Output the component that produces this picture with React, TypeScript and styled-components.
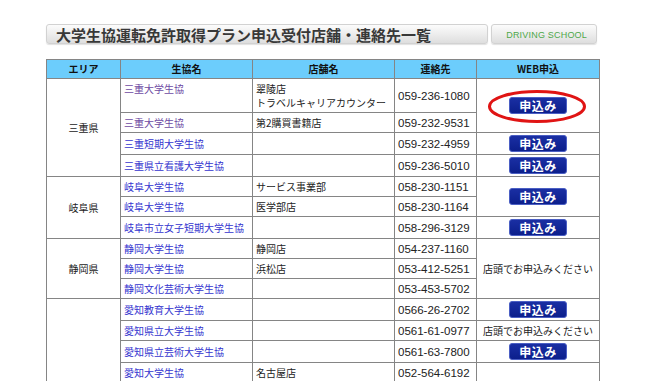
import React from 'react';
import styled, { createGlobalStyle } from 'styled-components';

const GlobalStyle = createGlobalStyle`
  html, body { margin: 0; padding: 0; background: #fff; }
  body {
    font-family: "Noto Sans CJK JP", "Noto Sans", sans-serif;
    color: #222;
  }
`;

const Page = styled.div`
  padding: 24px 0 0 46px;
  width: 553px;
`;

const HeadBar = styled.div`
  display: flex;
  gap: 3px;
  height: 20px;
`;

const TitleBox = styled.div`
  flex: 0 0 442px;
  box-sizing: border-box;
  border: 1px solid #d2d2d2;
  border-radius: 3px;
  background: linear-gradient(#fcfcfc, #dedede);
  box-shadow: 0 1px 1px rgba(0, 0, 0, 0.12);
  display: flex;
  align-items: center;
  padding-left: 9px;
  font-size: 15px;
  font-weight: bold;
  color: #383838;
  line-height: 1;
  white-space: nowrap;
`;

const SchoolBox = styled.div`
  flex: 0 0 106px;
  box-sizing: border-box;
  border: 1px solid #d2d2d2;
  border-radius: 3px;
  background: linear-gradient(#fcfcfc, #dedede);
  box-shadow: 0 1px 1px rgba(0, 0, 0, 0.12);
  display: flex;
  align-items: flex-end;
  justify-content: flex-end;
  padding: 0 9px 3px 0;
  font-family: "Liberation Sans", Arial, sans-serif;
  font-size: 9px;
  letter-spacing: 0.2px;
  color: #4ea84a;
  line-height: 1;
`;

const Table = styled.table`
  margin-top: 15px;
  width: 553px;
  table-layout: fixed;
  border-collapse: collapse;
  font-size: 10px;
  line-height: 14px;
`;

const HeadCell = styled.th`
  background: #6ccdfc;
  border: 1px solid #858585;
  padding: 2px 3px;
  font-weight: bold;
  color: #111;
  text-align: center;
`;

const Cell = styled.td<{ $center?: boolean }>`
  border: 1px solid #858585;
  padding: 3px 3px 2px;
  vertical-align: middle;
  text-align: ${(p) => (p.$center ? 'center' : 'left')};
  color: #222;
  white-space: nowrap;
  overflow: visible;
`;

const TopCell = styled(Cell)`
  vertical-align: top;
`;

const ButtonCell = styled(Cell)`
  padding: 2px 3px;
`;

const PhoneCell = styled(Cell)`
  font-family: "Liberation Sans", Arial, sans-serif;
  font-size: 11.5px;
`;

const CoopLink = styled.a<{ $visited?: boolean }>`
  color: ${(p) => (p.$visited ? '#6e4aa3' : '#3535cf')};
  text-decoration: none;
`;

const ButtonWrap = styled.div`
  position: relative;
  width: 58px;
  margin: 0 auto;
`;

const ApplyButton = styled.a`
  display: block;
  box-sizing: border-box;
  width: 58px;
  height: 17px;
  border: 1px solid #4b5fc4;
  border-radius: 3px;
  background: linear-gradient(#1a2fa3, #0c1f8c);
  color: #fff;
  font-size: 12px;
  font-weight: bold;
  line-height: 15px;
  text-align: center;
  text-decoration: none;
  letter-spacing: 0.5px;
`;

const Ellipse = styled.svg`
  position: absolute;
  left: -21px;
  top: -7px;
  width: 98px;
  height: 33px;
  overflow: visible;
  pointer-events: none;
`;

const ShopNote = styled.span`
  font-size: 10px;
  color: #222;
`;

const Apply: React.FC<{ circled?: boolean }> = ({ circled }) => (
  <ButtonWrap>
    <ApplyButton href="#">申込み</ApplyButton>
    {circled && (
      <Ellipse viewBox="0 0 98 33">
        <ellipse cx="49" cy="16.5" rx="47.5" ry="15" fill="none" stroke="#e01414" strokeWidth="3" />
      </Ellipse>
    )}
  </ButtonWrap>
);

type Row = {
  area?: { name: string; span: number };
  coop: string;
  visited?: boolean;
  shop?: string[];
  phone: string;
  web?: { kind: 'button' | 'note' | 'blank'; span: number; circled?: boolean };
};

const rows: Row[] = [
  { area: { name: '三重県', span: 4 }, coop: '三重大学生協', visited: true, shop: ['翠陵店', 'トラベルキャリアカウンター'], phone: '059-236-1080', web: { kind: 'button', span: 2, circled: true } },
  { coop: '三重大学生協', visited: true, shop: ['第2購買書籍店'], phone: '059-232-9531' },
  { coop: '三重短期大学生協', phone: '059-232-4959', web: { kind: 'button', span: 1 } },
  { coop: '三重県立看護大学生協', phone: '059-236-5010', web: { kind: 'button', span: 1 } },
  { area: { name: '岐阜県', span: 3 }, coop: '岐阜大学生協', shop: ['サービス事業部'], phone: '058-230-1151', web: { kind: 'button', span: 2 } },
  { coop: '岐阜大学生協', shop: ['医学部店'], phone: '058-230-1164' },
  { coop: '岐阜市立女子短期大学生協', phone: '058-296-3129', web: { kind: 'button', span: 1 } },
  { area: { name: '静岡県', span: 3 }, coop: '静岡大学生協', shop: ['静岡店'], phone: '054-237-1160', web: { kind: 'note', span: 3 } },
  { coop: '静岡大学生協', shop: ['浜松店'], phone: '053-412-5251' },
  { coop: '静岡文化芸術大学生協', phone: '053-453-5702' },
  { area: { name: '愛知県', span: 12 }, coop: '愛知教育大学生協', phone: '0566-26-2702', web: { kind: 'button', span: 1 } },
  { coop: '愛知県立大学生協', phone: '0561-61-0977', web: { kind: 'note', span: 1 } },
  { coop: '愛知県立芸術大学生協', phone: '0561-63-7800', web: { kind: 'button', span: 1 } },
  { coop: '愛知大学生協', shop: ['名古屋店'], phone: '052-564-6192', web: { kind: 'button', span: 3 } },
  { coop: '愛知大学生協', shop: ['車道店'], phone: '052-937-8131' },
  { coop: '愛知大学生協', shop: ['豊橋店'], phone: '0532-46-2431' },
  { coop: '名古屋大学生協', shop: ['南部購買部'], phone: '052-781-5131', web: { kind: 'button', span: 1 } },
  { coop: '名古屋工業大学生協', phone: '052-731-5231', web: { kind: 'button', span: 1 } },
  { coop: '名古屋市立大学生協', phone: '052-853-0801', web: { kind: 'button', span: 1 } },
  { coop: '南山大学生協', phone: '052-832-3111', web: { kind: 'note', span: 1 } },
  { coop: '中京大学生協', phone: '052-835-7111', web: { kind: 'note', span: 1 } },
  { coop: '豊橋技術科学大学生協', phone: '0532-44-6600', web: { kind: 'button', span: 1 } },
];

const WebCell: React.FC<{ web: NonNullable<Row['web']> }> = ({ web }) =>
  web.kind === 'button' ? (
    <ButtonCell $center rowSpan={web.span}>
      <Apply circled={web.circled} />
    </ButtonCell>
  ) : (
    <Cell $center rowSpan={web.span}>
      {web.kind === 'note' && <ShopNote>店頭でお申込みください</ShopNote>}
    </Cell>
  );

export default function App() {
  return (
    <>
      <GlobalStyle />
      <Page>
        <HeadBar>
          <TitleBox>大学生協運転免許取得プラン申込受付店舗・連絡先一覧</TitleBox>
          <SchoolBox>DRIVING SCHOOL</SchoolBox>
        </HeadBar>
        <Table>
          <colgroup>
            <col style={{ width: 74 }} />
            <col style={{ width: 132 }} />
            <col style={{ width: 142 }} />
            <col style={{ width: 82 }} />
            <col style={{ width: 123 }} />
          </colgroup>
          <thead>
            <tr>
              <HeadCell>エリア</HeadCell>
              <HeadCell>生協名</HeadCell>
              <HeadCell>店舗名</HeadCell>
              <HeadCell>連絡先</HeadCell>
              <HeadCell>WEB申込</HeadCell>
            </tr>
          </thead>
          <tbody>
            {rows.map((r, i) => {
              const multi = (r.shop?.length ?? 0) > 1;
              const CoopCell = multi ? TopCell : Cell;
              const ShopCell = multi ? TopCell : Cell;
              return (
                <tr key={i}>
                  {r.area && (
                    <Cell $center rowSpan={r.area.span}>
                      {r.area.name}
                    </Cell>
                  )}
                  <CoopCell>
                    <CoopLink href="#" $visited={r.visited}>
                      {r.coop}
                    </CoopLink>
                  </CoopCell>
                  <ShopCell>
                    {r.shop?.map((s, j) => (
                      <React.Fragment key={j}>
                        {j > 0 && <br />}
                        {s}
                      </React.Fragment>
                    ))}
                  </ShopCell>
                  <PhoneCell>{r.phone}</PhoneCell>
                  {r.web && <WebCell web={r.web} />}
                </tr>
              );
            })}
          </tbody>
        </Table>
      </Page>
    </>
  );
}
